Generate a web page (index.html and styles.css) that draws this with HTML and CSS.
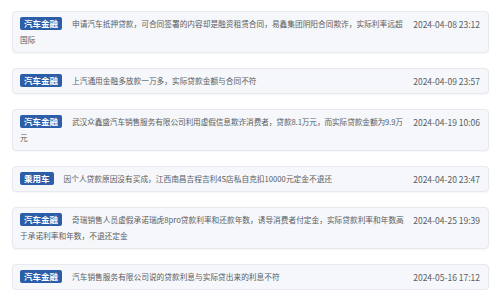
FILE: index.html
```html
<!DOCTYPE html>
<html lang="zh">
<head>
<meta charset="utf-8">
<link rel="stylesheet" href="styles.css">
</head>
<body>
<div class="list">
  <div class="card">
    <span class="date">2024-04-08 23:12</span>
    <span class="tag">汽车金融</span><span class="text">申请汽车抵押贷款，可合同签署的内容却是融资租赁合同，易鑫集团阴阳合同欺诈，实际利率远超国际</span>
  </div>
  <div class="card">
    <span class="date">2024-04-09 23:57</span>
    <span class="tag">汽车金融</span><span class="text">上汽通用金融多放款一万多，实际贷款金额与合同不符</span>
  </div>
  <div class="card">
    <span class="date">2024-04-19 10:06</span>
    <span class="tag">汽车金融</span><span class="text text-tight">武汉众鑫盛汽车销售服务有限公司利用虚假信息欺诈消费者，贷款8.1万元，而实际贷款金额为9.9万元</span>
  </div>
  <div class="card">
    <span class="date">2024-04-20 23:47</span>
    <span class="tag">乘用车</span><span class="text">因个人贷款原因没有买成，江西南昌吉程吉利4S店私自克扣10000元定金不退还</span>
  </div>
  <div class="card">
    <span class="date">2024-04-25 19:39</span>
    <span class="tag">汽车金融</span><span class="text">奇瑞销售人员虚假承诺瑞虎8pro贷款利率和还款年数，诱导消费者付定金，实际贷款利率和年数高于承诺利率和年数，不退还定金</span>
  </div>
  <div class="card">
    <span class="date">2024-05-16 17:12</span>
    <span class="tag">汽车金融</span><span class="text">汽车销售服务有限公司说的贷款利息与实际贷出来的利息不符</span>
  </div>
</div>
</body>
</html>
```
FILE: styles.css
```css
html, body {
  margin: 0;
  padding: 0;
  background: #ffffff;
}
body {
  font-family: "Noto Sans CJK SC", "Noto Sans", sans-serif;
  color: #585d63;
}
.list {
  display: flex;
  flex-direction: column;
  gap: 15px;
  padding: 11px 11px 0 12px;
}
.card {
  background: #f6f7fa;
  border: 1px solid #e7e9ee;
  border-radius: 4px;
  box-shadow: 0 1px 2px rgba(0, 0, 0, 0.04);
  padding: 4px 8px 4px 7px;
  font-size: 7.7px;
  line-height: 16px;
}
.tag {
  display: inline-block;
  background: #2c5da8;
  color: #ffffff;
  font-weight: 700;
  font-size: 8.5px;
  line-height: 13px;
  height: 13px;
  padding: 0 4px;
  border-radius: 2px;
  margin-right: 10px;
  vertical-align: top;
  margin-top: 1px;
}
.text-tight {
  letter-spacing: -0.12px;
}
.date {
  float: right;
  margin-left: 4px;
  font-size: 8.5px;
  color: #585d63;
}
```
